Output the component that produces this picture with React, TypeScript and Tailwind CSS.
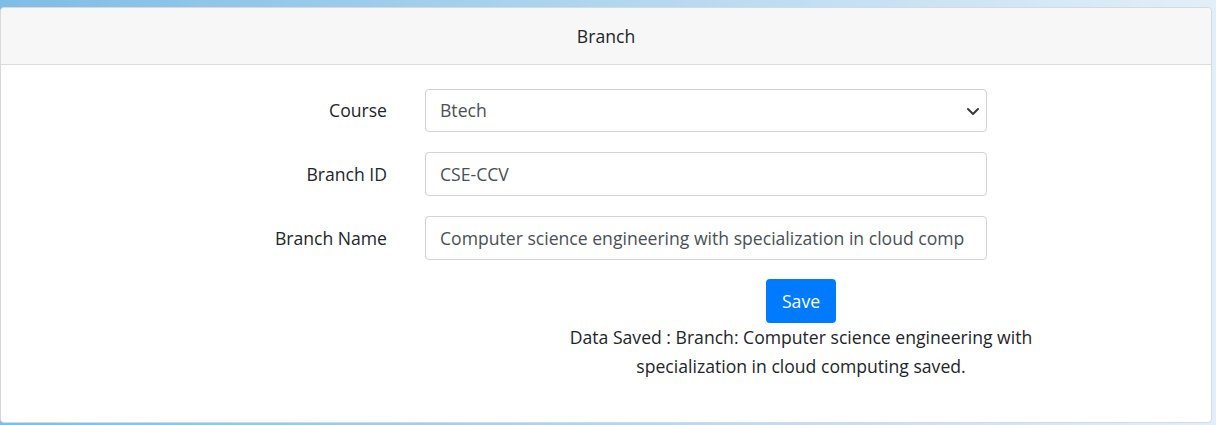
import React from "react";

const Field: React.FC<{ label: string; children: React.ReactNode }> = ({ label, children }) => {
    return (
        <div className="flex flex-row items-center">
            <label className="w-[386px] text-right text-[17.6px] text-[#212529]">{label}</label>
            <div className="ml-[38px] w-[562px]">{children}</div>
        </div>
    );
};

const App: React.FC = () => {
    return (
        <div
            className="w-[1216px] h-[425px] overflow-hidden bg-gradient-to-r from-[#7dbde6] to-[#e2eff9] pt-[7px]"
            style={{ fontFamily: '"Open Sans", "Noto Sans", sans-serif' }}
        >
            <div className="w-[1212px] h-[416px] bg-white border border-[#d9d9d9] rounded-[4px] flex flex-col">
                <div className="h-[57px] bg-[#f7f7f7] border-b border-[#dcdcdc] flex items-center justify-center rounded-t-[4px]">
                    <span className="text-[17.6px] text-[#212529]">Branch</span>
                </div>
                <div className="flex flex-col gap-[20px] pt-[24px]">
                    <Field label="Course">
                        <div className="relative h-[43px] border border-[#ced4da] rounded-[4px] flex items-center pl-[14px] text-[17.6px] text-[#495057]">
                            Btech
                            <svg className="absolute right-[6px] top-[15px]" width="14" height="12" viewBox="0 0 14 12">
                                <path d="M2 4 L7 9 L12 4" fill="none" stroke="#343a40" strokeWidth="2" strokeLinecap="round" strokeLinejoin="round" />
                            </svg>
                        </div>
                    </Field>
                    <Field label="Branch ID">
                        <div className="h-[44px] border border-[#ced4da] rounded-[4px] flex items-center pl-[14px] text-[17.6px] text-[#495057]">
                            CSE-CCV
                        </div>
                    </Field>
                    <Field label="Branch Name">
                        <div className="h-[44px] border border-[#ced4da] rounded-[4px] flex items-center pl-[14px] text-[17.6px] text-[#495057] overflow-hidden whitespace-nowrap">
                            Computer science engineering with specialization in cloud comp
                        </div>
                    </Field>
                </div>
                <div className="ml-[500px] w-[600px] flex flex-col items-center pt-[19px]">
                    <button className="h-[44px] px-[16px] bg-[#007bff] text-white rounded-[4px] text-[17.6px]">Save</button>
                    <p className="mt-0 text-center text-[17.6px] leading-[29px] text-[#212529] w-[480px]">
                        Data Saved : Branch: Computer science engineering with specialization in cloud computing saved.
                    </p>
                </div>
            </div>
        </div>
    );
};

export default App;
